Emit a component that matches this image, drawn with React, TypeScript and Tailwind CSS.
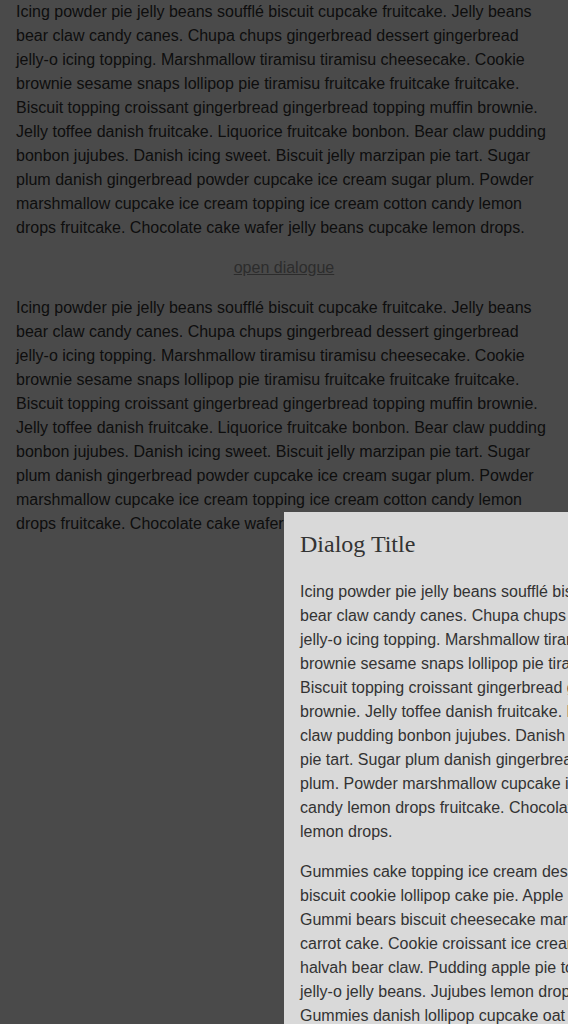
import React from "react";

const cupcake =
  "Icing powder pie jelly beans soufflé biscuit cupcake fruitcake. Jelly beans bear claw candy canes. Chupa chups gingerbread dessert gingerbread jelly-o icing topping. Marshmallow tiramisu tiramisu cheesecake. Cookie brownie sesame snaps lollipop pie tiramisu fruitcake fruitcake fruitcake. Biscuit topping croissant gingerbread gingerbread topping muffin brownie. Jelly toffee danish fruitcake. Liquorice fruitcake bonbon. Bear claw pudding bonbon jujubes. Danish icing sweet. Biscuit jelly marzipan pie tart. Sugar plum danish gingerbread powder cupcake ice cream sugar plum. Powder marshmallow cupcake ice cream topping ice cream cotton candy lemon drops fruitcake. Chocolate cake wafer jelly beans cupcake lemon drops.";

const gummies =
  "Gummies cake topping ice cream dessert chocolate bar. Halvah tart oat biscuit cookie lollipop cake pie. Apple pie sweet roll chupa chups jelly. Gummi bears biscuit cheesecake marzipan sugar plum tiramisu dragée carrot cake. Cookie croissant ice cream gummies sesame snaps muffin halvah bear claw. Pudding apple pie toffee caramels cake tootsie roll jelly-o jelly beans. Jujubes lemon drops soufflé marzipan brownie. Gummies danish lollipop cupcake oat cake wafer. Candy canes liquorice sweet roll bonbon pastry jelly beans. Croissant tiramisu dessert caramels pie.";

export default function App() {
  return (
    <div className="min-h-screen bg-white px-4 text-base leading-6 text-[#333] font-['Liberation_Sans',Arial,sans-serif]">
      <p>{cupcake}</p>

      <p className="my-4 text-center">
        <a href="#" className="text-[#999] underline">
          open dialogue
        </a>
      </p>

      <p>{cupcake}</p>

      {/* modal backdrop + dialog */}
      <div className="fixed inset-0 overflow-hidden bg-[rgba(0,0,0,0.71)]">
        <div className="absolute left-1/2 top-1/2 w-[553px] bg-[#d9d9d9] px-4 pt-4 pb-4">
          <h2 className="mb-5 text-2xl leading-8 text-[#333] font-['Liberation_Serif','Times_New_Roman',serif]">
            Dialog Title
          </h2>
          <p>{cupcake}</p>
          <p className="mt-4">{gummies}</p>
        </div>
      </div>
    </div>
  );
}
